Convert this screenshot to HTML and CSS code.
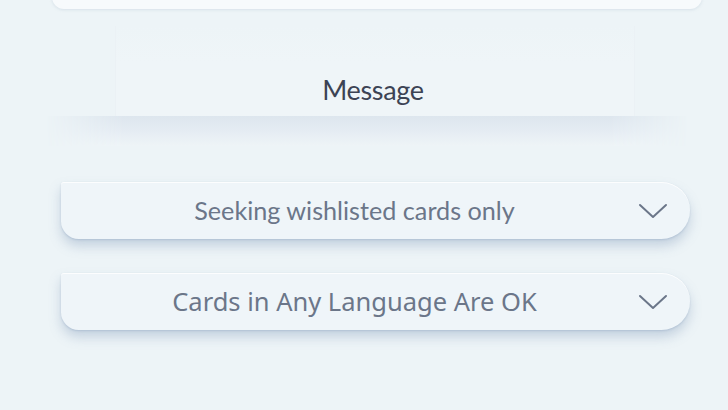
FILE: index.html
```html
<!DOCTYPE html>
<html lang="en">
<head>
<meta charset="utf-8">
<title>Trade preferences</title>
<link rel="stylesheet" href="styles.css">
</head>
<body>
<div class="page">
  <div class="top-card"></div>
  <section class="message">
    <div class="message-box"><span class="message-label">Message</span></div>
    <div class="message-shade"></div>
  </section>
  <div class="selects">
    <button class="select select-gill" type="button">
      <span class="select-text">Seeking wishlisted cards only</span>
      <svg class="chev" width="30" height="18" viewBox="0 0 30 18"><path d="M2 3 L15 15 L28 3" fill="none" stroke="#6b7689" stroke-width="2" stroke-linecap="round" stroke-linejoin="round"/></svg>
    </button>
    <button class="select select-noto" type="button">
      <span class="select-text">Cards in Any Language Are OK</span>
      <svg class="chev" width="30" height="18" viewBox="0 0 30 18"><path d="M2 3 L15 15 L28 3" fill="none" stroke="#6b7689" stroke-width="2" stroke-linecap="round" stroke-linejoin="round"/></svg>
    </button>
  </div>
</div>
</body>
</html>
```

FILE: styles.css
```css
* { box-sizing: border-box; }

html, body {
  margin: 0;
  padding: 0;
  width: 728px;
  height: 410px;
  overflow: hidden;
  background: #edf4f7;
}

.page {
  display: flex;
  flex-direction: column;
  height: 410px;
}

.top-card {
  margin: -40px 26px 0 52px;
  height: 49px;
  background: #f7fafc;
  border-radius: 0 0 12px 12px;
  box-shadow: 0 1px 3px rgba(150, 170, 190, 0.25);
}

.message {
  display: flex;
  flex-direction: column;
  align-items: stretch;
  margin-top: 17px;
}

.message-box {
  margin: 0 93px 0 115px;
  height: 90px;
  display: flex;
  align-items: flex-end;
  justify-content: center;
  padding-bottom: 10px;
  background: linear-gradient(180deg, #edf4f7 0%, #eff5f8 40%);
  border-left: 1px solid #ebf1f5;
  border-right: 1px solid #ebf1f5;
}

.message-label {
  font-family: "Lato", "DejaVu Sans", sans-serif;
  font-size: 27px;
  color: #3c4354;
  letter-spacing: -0.3px;
  transform: translateX(-2px);
}

.message-shade {
  margin: 0 40px 0 46px;
  height: 30px;
  background: linear-gradient(180deg, #dde6ee 0%, #e5ecf3 50%, #eef4f7 100%);
  -webkit-mask-image: linear-gradient(90deg, transparent 0, #000 12%, #000 88%, transparent 100%);
  mask-image: linear-gradient(90deg, transparent 0, #000 12%, #000 88%, transparent 100%);
}

.selects {
  display: flex;
  flex-direction: column;
  gap: 34px;
  margin: 36px 38px 0 61px;
}

.select {
  position: relative;
  height: 57px;
  width: 100%;
  border: 0;
  padding: 0 60px;
  display: flex;
  align-items: center;
  justify-content: center;
  background: #eff5f9;
  border-radius: 3px 29px 29px 18px;
  box-shadow: 0 7px 12px rgba(120, 145, 180, 0.35), 0 1px 2px rgba(120, 145, 180, 0.3), inset 0 1px 0 rgba(255, 255, 255, 0.8);
  color: #6b7689;
  cursor: pointer;
}

.select-text {
  line-height: 1;
  white-space: nowrap;
}

.select-gill .select-text {
  font-family: "Lato", "DejaVu Sans", sans-serif;
  font-size: 25.2px;
  transform: translateX(-21px);
}

.select-noto .select-text {
  font-family: "Noto Sans", "Open Sans", sans-serif;
  font-size: 25.5px;
  transform: translateX(-21px);
}

.chev {
  position: absolute;
  right: 22px;
  top: 20px;
}
```
